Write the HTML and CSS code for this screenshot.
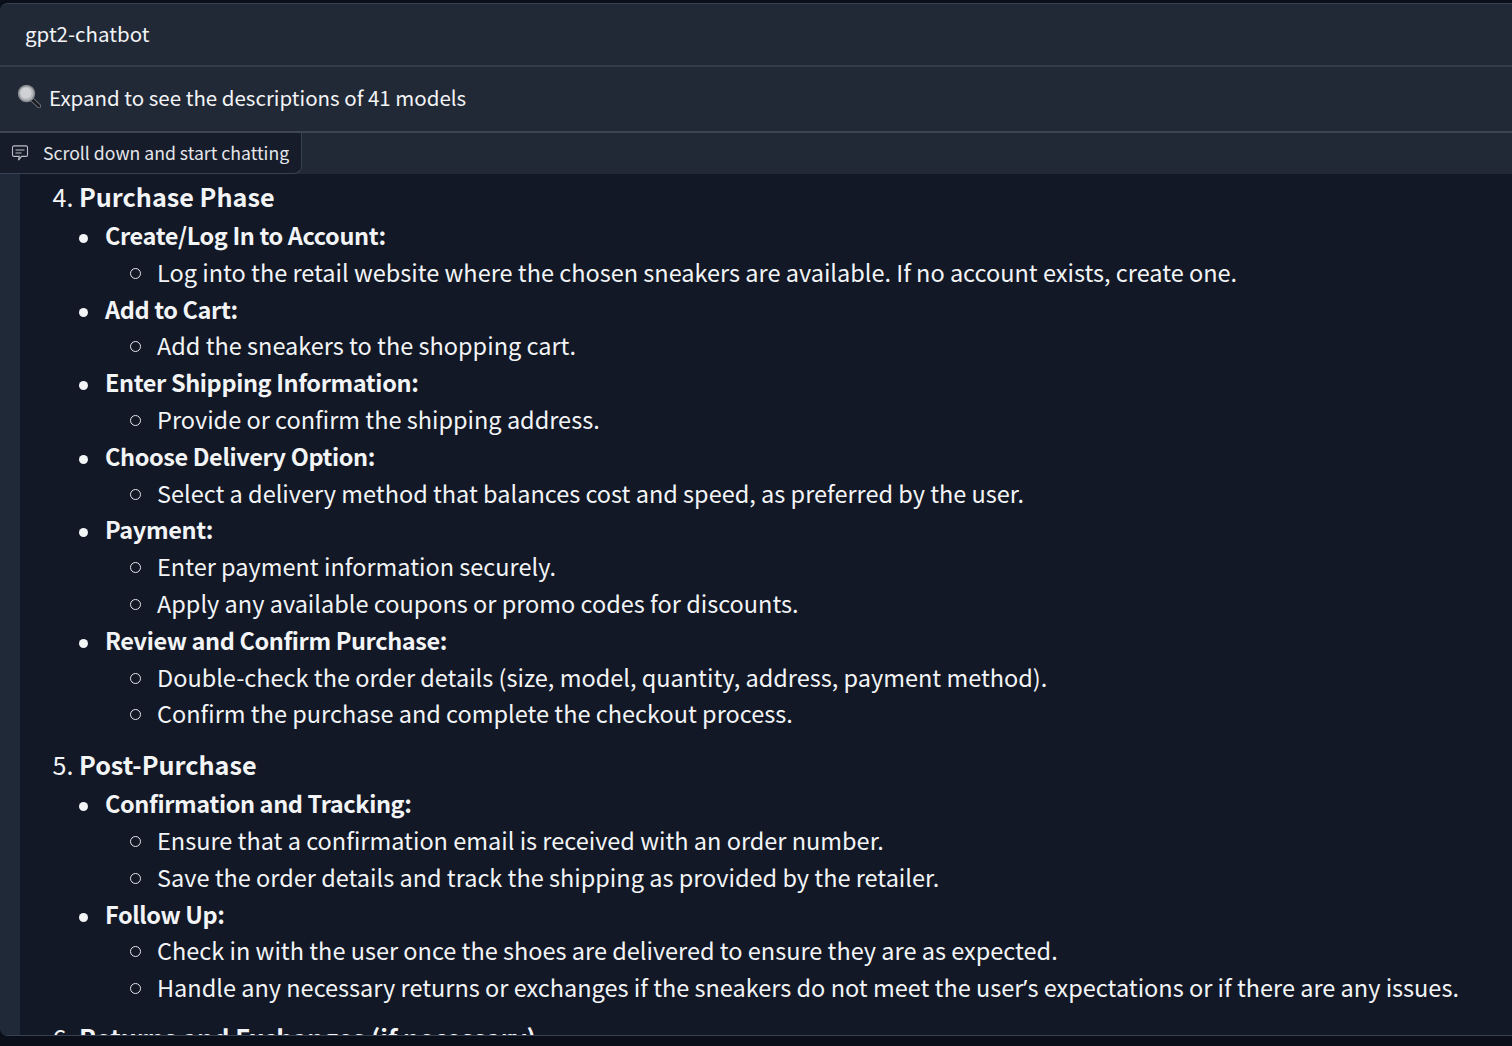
FILE: index.html
```html
<!DOCTYPE html>
<html lang="en">
<head>
<meta charset="utf-8">
<title>gpt2-chatbot</title>
<link rel="stylesheet" href="styles.css">
</head>
<body>
<main class="panel">
  <div class="row row-title">gpt2-chatbot</div>
  <div class="row row-expand">
    <svg class="lens" viewBox="0 0 24 24" aria-hidden="true">
      <path d="M15 15.5 L22 22" stroke="#7d8086" stroke-width="4.4" stroke-linecap="round"/>
      <path d="M15.5 16 L22 22" stroke="#1a1c21" stroke-width="2.8" stroke-linecap="round"/>
      <circle cx="9.5" cy="9.5" r="8" fill="#b3b5ba" stroke="#85888e" stroke-width="1.4"/>
      <circle cx="9" cy="9" r="5.6" fill="#cfd1d4"/>
    </svg>
    <span>Expand to see the descriptions of 41 models</span>
  </div>
  <section class="chat">
    <header class="chat-head">
      <div class="badge">
        <svg class="badge-icon" viewBox="0 0 24 24" fill="none" stroke="currentColor" stroke-width="1.5" aria-hidden="true">
          <path d="M2 4.5 a2 2 0 0 1 2-2 h16 a2 2 0 0 1 2 2 v10 a2 2 0 0 1-2 2 h-6 l-4 5 l1-5 H4 a2 2 0 0 1-2-2 z"/>
          <path d="M6 8h12M6 12h8"/>
        </svg>
        <span>Scroll down and start chatting</span>
      </div>
    </header>
    <div class="gutter">
      <article class="message">
        <ol class="steps" start="4">
          <li class="step"><strong class="step-title">Purchase Phase</strong>
            <ul class="group">
              <li><strong>Create/Log In to Account:</strong>
                <ul class="sub"><li>Log into the retail website where the chosen sneakers are available. If no account exists, create one.</li></ul></li>
              <li><strong>Add to Cart:</strong>
                <ul class="sub"><li>Add the sneakers to the shopping cart.</li></ul></li>
              <li><strong>Enter Shipping Information:</strong>
                <ul class="sub"><li>Provide or confirm the shipping address.</li></ul></li>
              <li><strong>Choose Delivery Option:</strong>
                <ul class="sub"><li>Select a delivery method that balances cost and speed, as preferred by the user.</li></ul></li>
              <li><strong>Payment:</strong>
                <ul class="sub"><li>Enter payment information securely.</li><li>Apply any available coupons or promo codes for discounts.</li></ul></li>
              <li><strong>Review and Confirm Purchase:</strong>
                <ul class="sub"><li>Double-check the order details (size, model, quantity, address, payment method).</li><li>Confirm the purchase and complete the checkout process.</li></ul></li>
            </ul>
          </li>
          <li class="step"><strong class="step-title">Post-Purchase</strong>
            <ul class="group">
              <li><strong>Confirmation and Tracking:</strong>
                <ul class="sub"><li>Ensure that a confirmation email is received with an order number.</li><li>Save the order details and track the shipping as provided by the retailer.</li></ul></li>
              <li><strong>Follow Up:</strong>
                <ul class="sub"><li>Check in with the user once the shoes are delivered to ensure they are as expected.</li><li>Handle any necessary returns or exchanges if the sneakers do not meet the user<span class="apos">’</span>s expectations or if there are any issues.</li></ul></li>
            </ul>
          </li>
          <li class="step"><strong class="step-title">Returns and Exchanges (if necessary)</strong></li>
        </ol>
      </article>
    </div>
  </section>
</main>
</body>
</html>
```
FILE: styles.css
```css
* { box-sizing: border-box; }
html, body { margin: 0; height: 100%; }
body {
  background: #0b0f19;
  font-family: "Noto Sans CJK SC", "Noto Sans", sans-serif;
  color: #f3f4f6;
  height: 1046px;
  overflow: hidden;
  padding-top: 3px;
}
.panel {
  height: 1033px;
  background: #1f2937;
  border-top: 1px solid #374151;
  border-bottom: 1px solid #374151;
  border-radius: 8px 0 0 8px;
  display: flex;
  flex-direction: column;
  overflow: hidden;
}
.row {
  display: flex;
  align-items: center;
  background: #222936;
  color: #f3f4f6;
  font-size: 20.5px;
  line-height: 30px;
  flex: none;
}
.row-title {
  height: 63px;
  padding-left: 25px;
  padding-bottom: 4px;
  border-bottom: 2px solid #343b48;
}
.row-expand {
  height: 66px;
  padding-left: 17px;
  padding-bottom: 4px;
  gap: 8px;
  border-bottom: 2px solid #3d4452;
}
.lens { width: 24px; height: 24px; flex: none; margin-top: -3px; }
.chat {
  flex: 1;
  min-height: 0;
  display: flex;
  flex-direction: column;
  background: #121826;
}
.chat-head {
  height: 41px;
  flex: none;
  background: #222936;
  display: flex;
}
.badge {
  width: 302px;
  height: 41px;
  display: flex;
  align-items: center;
  gap: 14px;
  padding-left: 11px;
  background: #161c2a;
  border-right: 1px solid #374151;
  border-bottom: 1px solid #374151;
  border-bottom-right-radius: 8px;
  font-size: 17.65px;
  line-height: 24px;
  white-space: nowrap;
  color: #e5e7eb;
}
.badge-icon { width: 18px; height: 18px; flex: none; color: #b9bdc5; }
.gutter {
  flex: 1;
  min-height: 0;
  padding-left: 20px;
  background: #1f2937;
  display: flex;
}
.message {
  flex: 1;
  min-width: 0;
  background: #121826;
  overflow: hidden;
  font-size: 23.5px;
  line-height: 36.8px;
  padding-top: 2px;
}
.steps { margin: 0; padding-left: 59px; }
.step { margin-bottom: 12px; }
.step:nth-child(2) { margin-bottom: 10px; }
.step::marker { font-size: 25px; }
.step-title { display: block; font-size: 25.2px; line-height: 41px; font-weight: 700; }
.group { margin: 0; padding-left: 26px; list-style: none; }
.group > li::before {
  content: "";
  display: inline-block;
  width: 9px;
  height: 9px;
  margin-left: -26.5px;
  margin-right: 17.5px;
  border-radius: 50%;
  background: #f3f4f6;
  vertical-align: 2px;
}
.sub { margin: 0; padding-left: 52px; list-style: none; }
.sub > li::before {
  content: "";
  display: inline-block;
  width: 9px;
  height: 9px;
  margin-left: -27.5px;
  margin-right: 16.5px;
  border-radius: 50%;
  border: 1.3px solid #e5e7eb;
  vertical-align: 3px;
}
.group strong { font-weight: 700; letter-spacing: -0.38px; }
.apos { font-family: "Noto Sans", sans-serif; }
```
